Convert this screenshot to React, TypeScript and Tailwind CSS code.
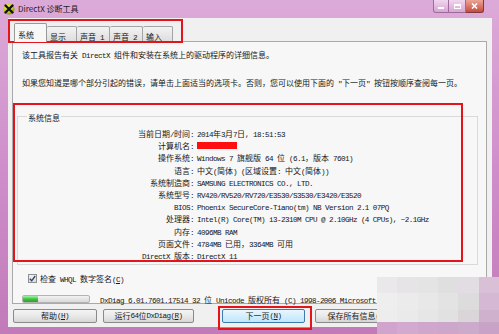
import React from 'react';

// split mixed text: CJK runs get the CJK face, Latin runs a narrow mono (SimSun-ish widths)
const CJK = /([\u2E80-\u9FFF\u3000-\u303F\uFF00-\uFFEF]+)/;

const Txt = ({ s }: { s: string }) => (
  <>
    {s.split(CJK).map((p, i) =>
      !p ? null : CJK.test(p) ? (
        <span key={i} className="font-['Noto_Sans_CJK_SC',sans-serif] text-[8px]">
          {p}
        </span>
      ) : (
        <span key={i} className="font-['Liberation_Mono',monospace] text-[7.6px] tracking-[-0.56px]">
          {p}
        </span>
      )
    )}
  </>
);

// label with an underlined access key, e.g. 帮助(H)
const Mnemonic = ({ pre, k, post = ')' }: { pre: string; k: string; post?: string }) => (
  <>
    <Txt s={pre} />
    <span className="font-['Liberation_Mono',monospace] text-[7.6px] tracking-[-0.56px] underline">{k}</span>
    <Txt s={post} />
  </>
);

const rows: [string, string | null][] = [
  ['当前日期/时间:', '2014年3月7日, 18:51:53'],
  ['计算机名:', null],
  ['操作系统:', 'Windows 7 旗舰版 64 位 (6.1，版本 7601)'],
  ['语言:', '中文(简体) (区域设置: 中文(简体))'],
  ['系统制造商:', 'SAMSUNG ELECTRONICS CO., LTD.'],
  ['系统型号:', 'RV420/RV520/RV720/E3530/S3530/E3420/E3520'],
  ['BIOS:', 'Phoenix SecureCore-Tiano(tm) NB Version 2.1 07PQ'],
  ['处理器:', 'Intel(R) Core(TM) i3-2310M CPU @ 2.10GHz (4 CPUs), ~2.1GHz'],
  ['内存:', '4096MB RAM'],
  ['页面文件:', '4784MB 已用，3364MB 可用'],
  ['DirectX 版本:', 'DirectX 11'],
];

const tabs = [
  { label: '显示', w: 'w-[30px]' },
  { label: '声音 1', w: 'w-[33px]' },
  { label: '声音 2', w: 'w-[33px]' },
  { label: '输入', w: 'w-[30px]' },
];

// pixelated blur patch over the bottom-right corner
const mosaic = [
  'bg-[#ebe8eb]', 'bg-[#e7e4e7]', 'bg-[#e4e4e4]', 'bg-[#e0dfe0]', 'bg-[#e2dde2]', 'bg-[#d9c0d7]',
  'bg-[#eeeeee]', 'bg-[#ebebeb]', 'bg-[#e8e8e8]', 'bg-[#e3e3e3]', 'bg-[#dddcdd]', 'bg-[#d5b9d4]',
  'bg-[#ededed]', 'bg-[#eaeaea]', 'bg-[#e6e6e6]', 'bg-[#e1e1e1]', 'bg-[#d9d5d9]', 'bg-[#cfb1ce]',
  'bg-[#d0a4cd]', 'bg-[#d2a9cf]', 'bg-[#cfa7cd]', 'bg-[#cda6cb]', 'bg-[#ccaacb]', 'bg-[#c9a3c7]',
];

const Button = ({ w, primary, children }: { w: string; primary?: boolean; children: React.ReactNode }) => (
  <div
    className={
      'flex h-[14px] items-center justify-center rounded-[2px] border leading-[12px] text-[#1a1a1a] ' +
      w +
      (primary
        ? ' border-[#3d7bad] bg-gradient-to-b from-[#eaf6fd] to-[#bee6fd]'
        : ' border-[#8a8a8a] bg-gradient-to-b from-[#f4f4f4] via-[#e9e9e9] to-[#d6d6d6]')
    }
  >
    {children}
  </div>
);

export default function App() {
  return (
    <div className="relative flex h-[334px] w-[499px] flex-col overflow-hidden bg-gradient-to-b from-[#dcaad8] via-[#cf8ecb] to-[#c27ab9] text-[#161616]">
      {/* title bar */}
      <div className="flex h-[18px] items-start justify-between">
        <div className="flex h-full items-center pl-[3px]">
          <svg width="12" height="12" viewBox="0 0 12 12">
            <defs>
              <radialGradient id="dx" cx="0.4" cy="0.35" r="0.7">
                <stop offset="0" stopColor="#f6f26a" />
                <stop offset="0.6" stopColor="#c6cf1c" />
                <stop offset="1" stopColor="#6f8a10" />
              </radialGradient>
            </defs>
            <circle cx="6" cy="6" r="5.5" fill="url(#dx)" />
            <path d="M2.5 2.5 L9.5 9.5 M9.5 2.5 L2.5 9.5" stroke="#111" strokeWidth="2.4" strokeLinecap="round" />
          </svg>
          <span className="ml-[3px] font-['Noto_Sans_CJK_SC',sans-serif] text-[8px] leading-[10px] text-[#1e1a1e]">
            DirectX 诊断工具
          </span>
        </div>
        <div className="mr-[15px] flex h-[13px]">
          <div className="flex w-[16px] items-center justify-center rounded-bl-[3px] border border-t-0 border-[#9d6b9a] bg-gradient-to-b from-[#f0d6ee] to-[#d8a4d4]">
            <div className="mt-[4px] h-[2px] w-[6px] bg-white" />
          </div>
          <div className="flex w-[17px] items-center justify-center border-b border-r border-[#9d6b9a] bg-gradient-to-b from-[#f0d6ee] to-[#d8a4d4]">
            <div className="h-[5px] w-[7px] border border-t-2 border-white" />
          </div>
          <div className="flex w-[18px] items-center justify-center rounded-br-[3px] border border-t-0 border-l-0 border-[#7d3a3a] bg-gradient-to-b from-[#eba497] to-[#c74a3d]">
            <svg width="7" height="6" viewBox="0 0 7 6">
              <path d="M1 0.5 L6 5.5 M6 0.5 L1 5.5" stroke="#fff" strokeWidth="1.6" />
            </svg>
          </div>
        </div>
      </div>

      {/* client area */}
      <div className="ml-[8px] mr-[7px] h-[309px] bg-[#f0f0f0] pt-[5px]">
        {/* tab strip */}
        <div className="ml-[6px] flex h-[18px] items-end">
          <div className="relative z-10 -mb-px h-[19px] w-[33px] rounded-t-[2px] border border-b-0 border-[#999] bg-[#f7f7f7] pl-[3px] pt-[2px] leading-[12px]">
            <Txt s="系统" />
          </div>
          {tabs.map((t) => (
            <div
              key={t.label}
              className={
                'h-[15px] rounded-t-[2px] border-r border-t border-[#a3a3a3] bg-gradient-to-b from-[#f3f3f3] to-[#dedede] pl-[3px] pt-[1px] leading-[12px] ' +
                t.w
              }
            >
              <Txt s={t.label} />
            </div>
          ))}
        </div>

        {/* tab page */}
        <div className="ml-[4px] flex h-[263px] w-[475px] flex-col border border-[#a9a9a9] bg-[#f7f7f7]">
          <div className="mt-[4px] h-[12px] whitespace-nowrap pl-[9px] leading-[12px]">
            <Txt s="该工具报告有关 DirectX 组件和安装在系统上的驱动程序的详细信息。" />
          </div>
          <div className="mt-[16px] h-[12px] whitespace-nowrap pl-[9px] leading-[12px]">
            <Txt s='如果您知道是哪个部分引起的错误，请单击上面适当的选项卡。否则，您可以使用下面的 "下一页" 按钮按顺序查阅每一页。' />
          </div>

          <fieldset className="ml-[4px] mr-[8px] mt-[24px] border border-[#d9d9d9] pb-[3px] pt-[4px]">
            <legend className="ml-[9px] px-[1px] leading-[10px]">
              <Txt s="系统信息" />
            </legend>
            {rows.map(([label, value]) => (
              <div key={label} className="flex h-[12.2px] items-center whitespace-nowrap leading-[12px]">
                <div className="w-[176px] text-right">
                  <Txt s={label} />
                </div>
                <div className="ml-[3px]">
                  {value ? <Txt s={value} /> : <div className="h-[7px] w-[40px] bg-[#ff1010]" />}
                </div>
              </div>
            ))}
          </fieldset>

          <div className="mt-[8px] flex h-[10px] items-center pl-[15px] leading-[10px]">
            <div className="flex h-[9px] w-[9px] items-center justify-center border border-[#8e8f8f] bg-gradient-to-b from-[#f1f1f1] to-[#dcdcdc]">
              <svg width="7" height="7" viewBox="0 0 7 7">
                <path d="M0.8 3.8 L2.7 5.8 L6.2 1" fill="none" stroke="#2a3e6b" strokeWidth="1.3" />
              </svg>
            </div>
            <span className="ml-[3px] whitespace-nowrap">
              <Mnemonic pre="检查 WHQL 数字签名(" k="C" />
            </span>
          </div>

          <div className="mt-[11px] flex h-[10px] items-center pl-[9px] leading-[10px]">
            <div className="h-[8px] w-[68px] overflow-hidden rounded-[2px] border border-[#b3b3b3] bg-gradient-to-b from-[#f2f2f2] to-[#d9d9d9]">
              <div className="h-full w-[15px] bg-gradient-to-b from-[#a6f0a6] via-[#3cc43c] to-[#2aa52a]" />
            </div>
            <span className="ml-[10px] whitespace-nowrap">
              <Txt s="DxDiag 6.01.7601.17514 32 位 Unicode 版权所有 (C) 1998-2006 Microsoft" />
            </span>
          </div>
        </div>

        {/* command buttons */}
        <div className="ml-[5px] mt-[5px] flex whitespace-nowrap">
          <Button w="w-[84px]">
            <Mnemonic pre="帮助(" k="H" />
          </Button>
          <div className="ml-[6px]">
            <Button w="w-[91px]">
              <Mnemonic pre="运行 64 位 DxDiag(" k="R" />
            </Button>
          </div>
          <div className="ml-[28px]">
            <Button w="w-[83px]" primary>
              <Mnemonic pre="下一页(" k="N" />
            </Button>
          </div>
          <div className="ml-[10px]">
            <Button w="w-[85px]">
              <Mnemonic pre="保存所有信息(" k="S" />
            </Button>
          </div>
        </div>
      </div>

      {/* red annotation boxes */}
      <div className="absolute left-[8px] top-[19px] h-[24px] w-[175px] border-2 border-[#e3141c]" />
      <div className="absolute left-[13px] top-[103px] h-[159px] w-[450px] border-2 border-[#e3141c]" />
      <div className="absolute left-[218px] top-[306px] h-[24px] w-[94px] border-2 border-[#e3141c]" />

      {/* mosaic patch */}
      <div className="absolute left-[377px] top-[277px] grid h-[57px] w-[122px] grid-cols-6 grid-rows-[16px_17px_12px_12px]">
        {mosaic.map((c, i) => (
          <div key={i} className={c} />
        ))}
      </div>
    </div>
  );
}
